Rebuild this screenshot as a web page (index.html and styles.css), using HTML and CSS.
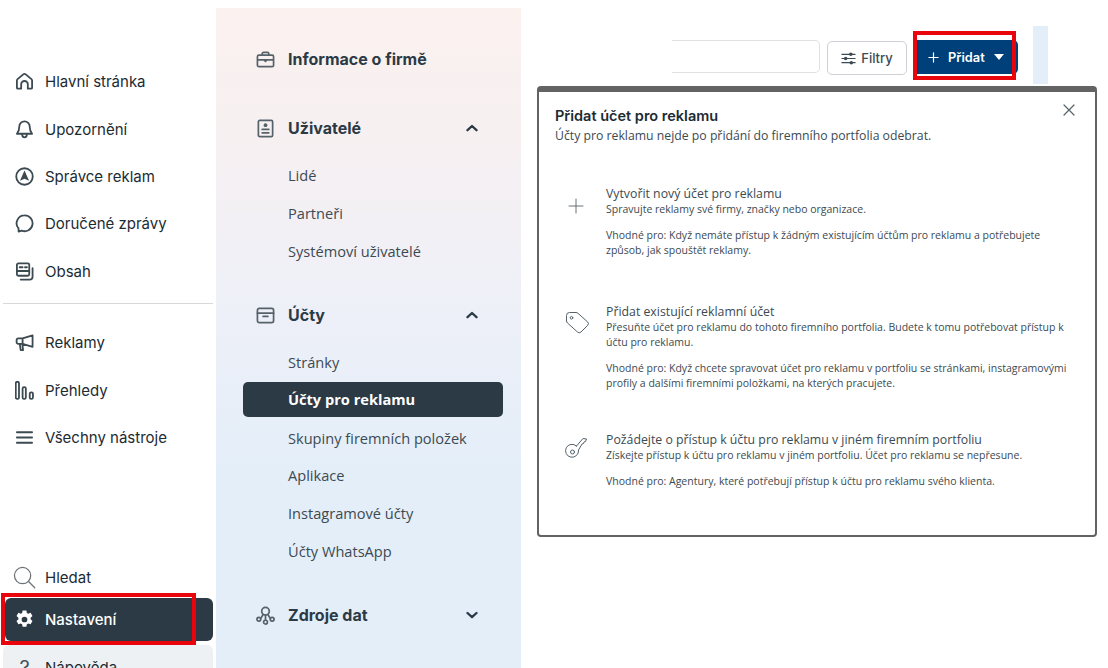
FILE: index.html
```html
<!DOCTYPE html>
<html lang="cs">
<head>
    <meta charset="UTF-8">
    <title>Účty pro reklamu</title>
    <link rel="stylesheet" href="styles.css">
</head>
<body>
    <div class="page">
        <div class="sidebar">
            <div class="nav-group">
                <div class="nav-item">
                    <svg class="nav-icon" viewBox="0 0 20 20"><path d="M3 17.500a1 1 0 0 1-1-1V9a2 2 0 0 1 .7-1.500l6-5a2 2 0 0 1 2.600 0l6 5A2 2 0 0 1 18 9v7.500a1 1 0 0 1-1 1h-3.500V13a3.500 3.500 0 0 0-7 0v4.500z"/></svg>
                    <span>Hlavní stránka</span>
                </div>
                <div class="nav-item">
                    <svg class="nav-icon" viewBox="0 0 20 20"><path d="M10 1.500a5.500 5.500 0 0 0-5.500 5.500c0 4.300-1 5.700-2.500 7.500h16c-1.500-1.800-2.500-3.200-2.500-7.500A5.500 5.500 0 0 0 10 1.500zM7.500 15c0 2 1 3.200 2.500 3.200s2.500-1.200 2.500-3.200"/></svg>
                    <span>Upozornění</span>
                </div>
                <div class="nav-item">
                    <svg class="nav-icon" viewBox="0 0 20 20"><circle cx="10" cy="10" r="8.700"/><path class="solid" d="M10 3.800l4.800 10.700L10 12.300l-4.800 2.200z"/></svg>
                    <span>Správce reklam</span>
                </div>
                <div class="nav-item">
                    <svg class="nav-icon" viewBox="0 0 20 20"><path d="M10 1.500a8.300 8.300 0 0 0-6.300 13.700l.1 3.300 3.300-1a8.300 8.300 0 1 0 2.900-16z"/></svg>
                    <span>Doručené zprávy</span>
                </div>
                <div class="nav-item">
                    <svg class="nav-icon" viewBox="0 0 20 20"><path d="M3.500 1.500h10a1.500 1.500 0 0 1 1.500 1.500v10a1.500 1.500 0 0 1-1.500 1.500h-10A1.500 1.500 0 0 1 2 13V3a1.500 1.500 0 0 1 1.500-1.500zM2 9.500h13M5 5.500h3M10.500 5.500H12.500M18.500 6.500v9a3 3 0 0 1-3 3H6"/></svg>
                    <span>Obsah</span>
                </div>
            </div>
            <div class="nav-divider"></div>
            <div class="nav-group">
                <div class="nav-item">
                    <svg class="nav-icon" viewBox="0 0 20 20"><path d="M18.500 2.500v12L8 11.500H3.500a1.800 1.800 0 0 1-1.800-1.800V7.500a1.800 1.800 0 0 1 1.800-1.800H8zM5 11.500l1 6.500h2.500l-.8-6.500M8 5.700v5.800"/></svg>
                    <span>Reklamy</span>
                </div>
                <div class="nav-item">
                    <svg class="nav-icon" viewBox="0 0 20 20"><rect x="0.800" y="0.800" width="3.400" height="18" rx="1.500"/><rect x="8" y="6.500" width="3.400" height="12.300" rx="1.500"/><rect x="15.500" y="12" width="3.400" height="6.800" rx="1.500"/></svg>
                    <span>Přehledy</span>
                </div>
                <div class="nav-item">
                    <svg class="nav-icon" viewBox="0 0 20 20"><path d="M2 4.500h16M2 10h16M2 15.500h16"/></svg>
                    <span>Všechny nástroje</span>
                </div>
            </div>
            <div class="nav-bottom">
                <div class="nav-item nav-search">
                    <svg class="nav-icon search-icon" viewBox="0 0 24 24"><circle cx="10" cy="10" r="8.500"/><path d="M16.200 16.200l6.500 6.500"/></svg>
                    <span>Hledat</span>
                </div>
                <div class="nav-item nav-active">
                    <svg class="nav-icon" viewBox="0 0 20 20"><path class="solid-white" fill-rule="evenodd" d="M8 .5h4l.5 2.600 1.400.8 2.500-.9 2 3.400-2 1.800v1.600l2 1.800-2 3.400-2.500-.9-1.400.8-.5 2.600H8l-.5-2.600-1.400-.8-2.500.9-2-3.400 2-1.800V8.200l-2-1.800 2-3.400 2.500.9 1.400-.8zM10 7a3 3 0 1 0 0 6 3 3 0 0 0 0-6z"/></svg>
                    <span>Nastavení</span>
                    <div class="mark mark-settings"></div>
                </div>
                <div class="nav-item nav-help">
                    <span class="help-glyph">?</span>
                    <span>Nápověda</span>
                </div>
            </div>
        </div>

        <div class="settings-panel">
            <div class="section-head section-first">
                <svg class="section-icon" viewBox="0 0 20 20"><path d="M3 5.500h14a1.500 1.500 0 0 1 1.500 1.500v9a1.500 1.500 0 0 1-1.500 1.500H3A1.500 1.500 0 0 1 1.500 16V7A1.500 1.500 0 0 1 3 5.500zM6.500 5.500V4A1.500 1.500 0 0 1 8 2.500h4A1.500 1.500 0 0 1 13.500 4v1.500M1.500 10.500h17M8.500 10.500l1.500 1.500 1.500-1.500"/></svg>
                <span>Informace o firmě</span>
            </div>
            <div class="section-head">
                <svg class="section-icon" viewBox="0 0 20 20"><rect x="2.500" y="1.500" width="15" height="17" rx="1.500"/><circle class="solid" cx="10" cy="6.500" r="2"/><path d="M6.500 11h7M6.500 14.500h7"/></svg>
                <span>Uživatelé</span>
                <svg class="chevron" viewBox="0 0 12 8"><path d="M1.500 6.200L6 2l4.500 4.200"/></svg>
            </div>
            <div class="sub-list">
                <div class="sub-item">Lidé</div>
                <div class="sub-item">Partneři</div>
                <div class="sub-item">Systémoví uživatelé</div>
            </div>
            <div class="section-head">
                <svg class="section-icon" viewBox="0 0 20 20"><rect x="1.500" y="2.500" width="17" height="15" rx="2"/><path d="M1.500 7.500h17M7.500 11h5"/></svg>
                <span>Účty</span>
                <svg class="chevron" viewBox="0 0 12 8"><path d="M1.500 6.200L6 2l4.500 4.200"/></svg>
            </div>
            <div class="sub-list">
                <div class="sub-item">Stránky</div>
                <div class="sub-item sub-active">Účty pro reklamu</div>
                <div class="sub-item">Skupiny firemních položek</div>
                <div class="sub-item">Aplikace</div>
                <div class="sub-item">Instagramové účty</div>
                <div class="sub-item">Účty WhatsApp</div>
            </div>
            <div class="section-head">
                <svg class="section-icon" viewBox="0 0 20 20"><circle cx="10" cy="5.500" r="4"/><circle cx="3" cy="14" r="2"/><circle cx="17" cy="14" r="2"/><circle cx="10" cy="17" r="2"/><path d="M7.500 9L5 13M12.500 9l2.500 4M10 9.500V15"/></svg>
                <span>Zdroje dat</span>
                <svg class="chevron" viewBox="0 0 12 8"><path d="M1.500 2L6 6.200 10.500 2"/></svg>
            </div>
        </div>

        <div class="content">
            <div class="toolbar">
                <div class="search-box"></div>
                <div class="filter-btn">
                    <svg class="filter-icon" viewBox="0 0 16 16"><path d="M1 3.500h14M1 8h14M1 12.500h14"/><circle class="solid" cx="10.500" cy="3.500" r="1.900"/><circle class="solid" cx="5" cy="8" r="1.900"/><circle class="solid" cx="11" cy="12.500" r="1.900"/></svg>
                    <span>Filtry</span>
                </div>
                <div class="add-btn">
                    <svg class="add-plus" viewBox="0 0 12 12"><path d="M6 1v10M1 6h10"/></svg>
                    <span>Přidat</span>
                    <span class="add-caret"></span>
                    <div class="mark mark-add"></div>
                </div>
                <div class="edge-strip"></div>
            </div>

            <div class="modal">
                <svg class="modal-close" viewBox="0 0 12 12"><path d="M1 1l10 10M11 1L1 11"/></svg>
                <div class="modal-title">Přidat účet pro reklamu</div>
                <div class="modal-sub">Účty pro reklamu nejde po přidání do firemního portfolia odebrat.</div>

                <div class="option option-create">
                    <svg class="option-icon" viewBox="0 0 20 20"><path d="M10 3v14M3 10h14"/></svg>
                    <div>
                        <div class="option-title">Vytvořit nový účet pro reklamu</div>
                        <p>Spravujte reklamy své firmy, značky nebo organizace.</p>
                        <p class="option-note">Vhodné pro: Když nemáte přístup k žádným existujícím účtům pro reklamu a potřebujete způsob, jak spouštět reklamy.</p>
                    </div>
                </div>
                <div class="option">
                    <svg class="option-icon tag-icon" viewBox="0 0 26 25"><path d="M2.500 11V5.500a3 3 0 0 1 3-3H12a3 3 0 0 1 2 .8l9.500 8.500a2.500 2.500 0 0 1 0 3.700l-6.500 6.500a2.500 2.500 0 0 1-3.500 0L3.500 13a3 3 0 0 1-1-2z"/><circle cx="7.500" cy="7.800" r="1.300"/></svg>
                    <div>
                        <div class="option-title">Přidat existující reklamní účet</div>
                        <p>Přesuňte účet pro reklamu do tohoto firemního portfolia. Budete k tomu potřebovat přístup k účtu pro reklamu.</p>
                        <p class="option-note">Vhodné pro: Když chcete spravovat účet pro reklamu v portfoliu se stránkami, instagramovými profily a dalšími firemními položkami, na kterých pracujete.</p>
                    </div>
                </div>
                <div class="option">
                    <svg class="option-icon key-icon" viewBox="0 0 24 24"><path d="M11.500 11L18 3.500l3.500.5-1 2.500-1.500.5-.5 1.500-1.500.5L13.500 15a6.500 6.500 0 1 1-2-4z"/><circle cx="7.500" cy="17" r="2"/></svg>
                    <div>
                        <div class="option-title">Požádejte o přístup k účtu pro reklamu v jiném firemním portfoliu</div>
                        <p>Získejte přístup k účtu pro reklamu v jiném portfoliu. Účet pro reklamu se nepřesune.</p>
                        <p class="option-note">Vhodné pro: Agentury, které potřebují přístup k účtu pro reklamu svého klienta.</p>
                    </div>
                </div>
            </div>
        </div>
    </div>
</body>
</html>
```

FILE: styles.css
```css
* {
    box-sizing: border-box;
}

body {
    margin: 0;
    background-color: #fff;
    color: #1c2b33;
    font-family: 'Inter', 'Noto Sans', sans-serif;
}

.page {
    display: flex;
    height: 668px;
    overflow: hidden;
}

svg {
    fill: none;
    stroke: currentColor;
    stroke-linecap: round;
    stroke-linejoin: round;
    flex-shrink: 0;
}

.solid {
    fill: currentColor;
    stroke: none;
}

.solid-white {
    fill: #fff;
    stroke: none;
}

/* left navigation */
.sidebar {
    width: 216px;
    flex-shrink: 0;
    height: 668px;
    padding-top: 58px;
    display: flex;
    flex-direction: column;
}

.nav-item {
    position: relative;
    height: 47.4px;
    padding-left: 15px;
    display: flex;
    align-items: center;
    gap: 11px;
    font-size: 15px;
    font-weight: 400;
}

.nav-icon {
    width: 19px;
    height: 19px;
    stroke-width: 1.9;
    color: #3c4a52;
}

.nav-divider {
    height: 1px;
    margin: 8px 3px 15px;
    background-color: #d6d9dc;
}

.nav-bottom {
    margin-top: auto;
    display: flex;
    flex-direction: column;
}

.nav-search {
    height: 42px;
    padding-left: 13px;
    gap: 9px;
}

.search-icon {
    width: 23px;
    height: 23px;
    stroke-width: 1.300;
    color: #6b7378;
}

.nav-active {
    height: 43px;
    margin: 0 3px 0 5px;
    padding-left: 10px;
    border-radius: 6px;
    background-color: #2b3a45;
    color: #fff;
    font-weight: 500;
}

.nav-help {
    height: 40px;
    margin: 4px 3px -17px;
    padding-left: 12px;
    border-radius: 6px;
    background-color: #eef1f4;
    align-items: flex-start;
    padding-top: 13px;
}

.help-glyph {
    width: 19px;
    font-size: 20px;
    line-height: 20px;
    text-align: center;
    color: #46545c;
}

/* red annotation frames */
.mark {
    position: absolute;
    border: 4px solid #e8060c;
    pointer-events: none;
}

.mark-settings {
    left: -4px;
    top: -5px;
    width: 195px;
    height: 52px;
}

.mark-add {
    left: -3px;
    top: -9px;
    width: 103px;
    height: 49px;
}

/* settings list */
.settings-panel {
    width: 305px;
    flex-shrink: 0;
    height: 660px;
    margin-top: 8px;
    padding: 32px 18px 0 0;
    background: linear-gradient(180deg, #fbf1ef 0%, #f6f0f2 22%, #eef0f8 45%, #e4eef9 70%, #e3eef9 100%);
}

.section-head {
    height: 38px;
    margin-top: 31px;
    padding: 0 25px 0 40px;
    display: flex;
    align-items: center;
    gap: 13px;
    font-size: 16px;
    font-weight: 700;
    color: #2b3a45;
}

.section-first {
    margin-top: 0;
}

.section-icon {
    width: 19px;
    height: 19px;
    stroke-width: 1.800;
    color: #56626a;
}

.section-head .chevron {
    width: 12px;
    height: 8px;
    margin-left: auto;
    stroke-width: 2.300;
}

.sub-list {
    display: flex;
    flex-direction: column;
    margin: 9.500px 0 -4.500px 27px;
}

.sub-item {
    height: 37.700px;
    padding-left: 45px;
    display: flex;
    align-items: center;
    font-family: 'Open Sans', sans-serif;
    font-size: 14.600px;
    color: #3c4a52;
}

.sub-active {
    height: 35px;
    margin: 0.500px 0 2.200px;
    border-radius: 5px;
    background-color: #2b3a45;
    color: #fff;
    font-weight: 700;
}

/* right area */
.content {
    position: relative;
    flex-grow: 1;
}

.toolbar {
    height: 85px;
    padding: 40px 0 0 151px;
    display: flex;
    align-items: flex-start;
}

.search-box {
    width: 148px;
    height: 33px;
    border: 1px solid #dfe2e5;
    border-left: none;
    border-radius: 0 5px 5px 0;
}

.filter-btn {
    width: 80px;
    height: 34px;
    margin-left: 7px;
    margin-top: 1px;
    border: 1px solid #cdd1d5;
    border-radius: 5px;
    display: flex;
    align-items: center;
    justify-content: center;
    gap: 5px;
    font-size: 13px;
    font-weight: 500;
    color: #3c4a52;
}

.filter-icon {
    width: 15px;
    height: 15px;
    stroke-width: 1.300;
}

.add-btn {
    position: relative;
    width: 102px;
    height: 34px;
    margin-left: 9px;
    padding-left: 12px;
    border-radius: 0 5px 5px 0;
    background-color: #00407a;
    color: #fff;
    display: flex;
    align-items: center;
    font-size: 12.800px;
    font-weight: 600;
}

.add-plus {
    width: 11px;
    height: 11px;
    margin-right: 9px;
    stroke-width: 1.300;
}

.add-caret {
    margin-left: 9px;
    border-left: 5.500px solid transparent;
    border-right: 5.500px solid transparent;
    border-top: 6px solid #fff;
}

.edge-strip {
    width: 15px;
    height: 58px;
    margin-left: 15px;
    margin-top: -14px;
    background-color: #e4eef9;
}

/* modal */
.modal {
    position: absolute;
    left: 16px;
    top: 86px;
    width: 560px;
    height: 451px;
    padding: 14px 16px 0;
    background-color: #fff;
    border: 2px solid #636363;
    border-top-width: 6px;
    border-radius: 4px;
    font-family: 'Open Sans', sans-serif;
    color: #3c4a52;
}

.modal-close {
    position: absolute;
    right: 20px;
    top: 12px;
    width: 12px;
    height: 12px;
    stroke-width: 1.200;
    color: #56626a;
}

.modal-title {
    font-family: 'Inter', sans-serif;
    font-size: 14.500px;
    font-weight: 600;
    line-height: 20px;
    color: #1c2b33;
}

.modal-sub {
    font-size: 12.250px;
    line-height: 19px;
}

.option {
    display: grid;
    grid-template-columns: 51px 1fr;
    margin-top: 41px;
    padding-right: 12px;
}

.option-create {
    margin-bottom: 46px;
}

.option-icon {
    width: 20px;
    height: 20px;
    margin-top: 10px;
    margin-left: 11px;
    stroke-width: 0.900;
    color: #56626a;
}

.tag-icon {
    width: 26px;
    height: 25px;
    margin-left: 9px;
    margin-top: 6px;
    stroke-width: 1;
}

.key-icon {
    width: 24px;
    height: 24px;
    margin-left: 10px;
    margin-top: 3px;
    stroke-width: 1;
}

.option-title {
    font-size: 12.300px;
    line-height: 16px;
    color: #3c4a52;
}

.option p {
    margin: 0;
    font-size: 10.500px;
    line-height: 15px;
}

.option .option-note {
    margin-top: 11px;
}
```
